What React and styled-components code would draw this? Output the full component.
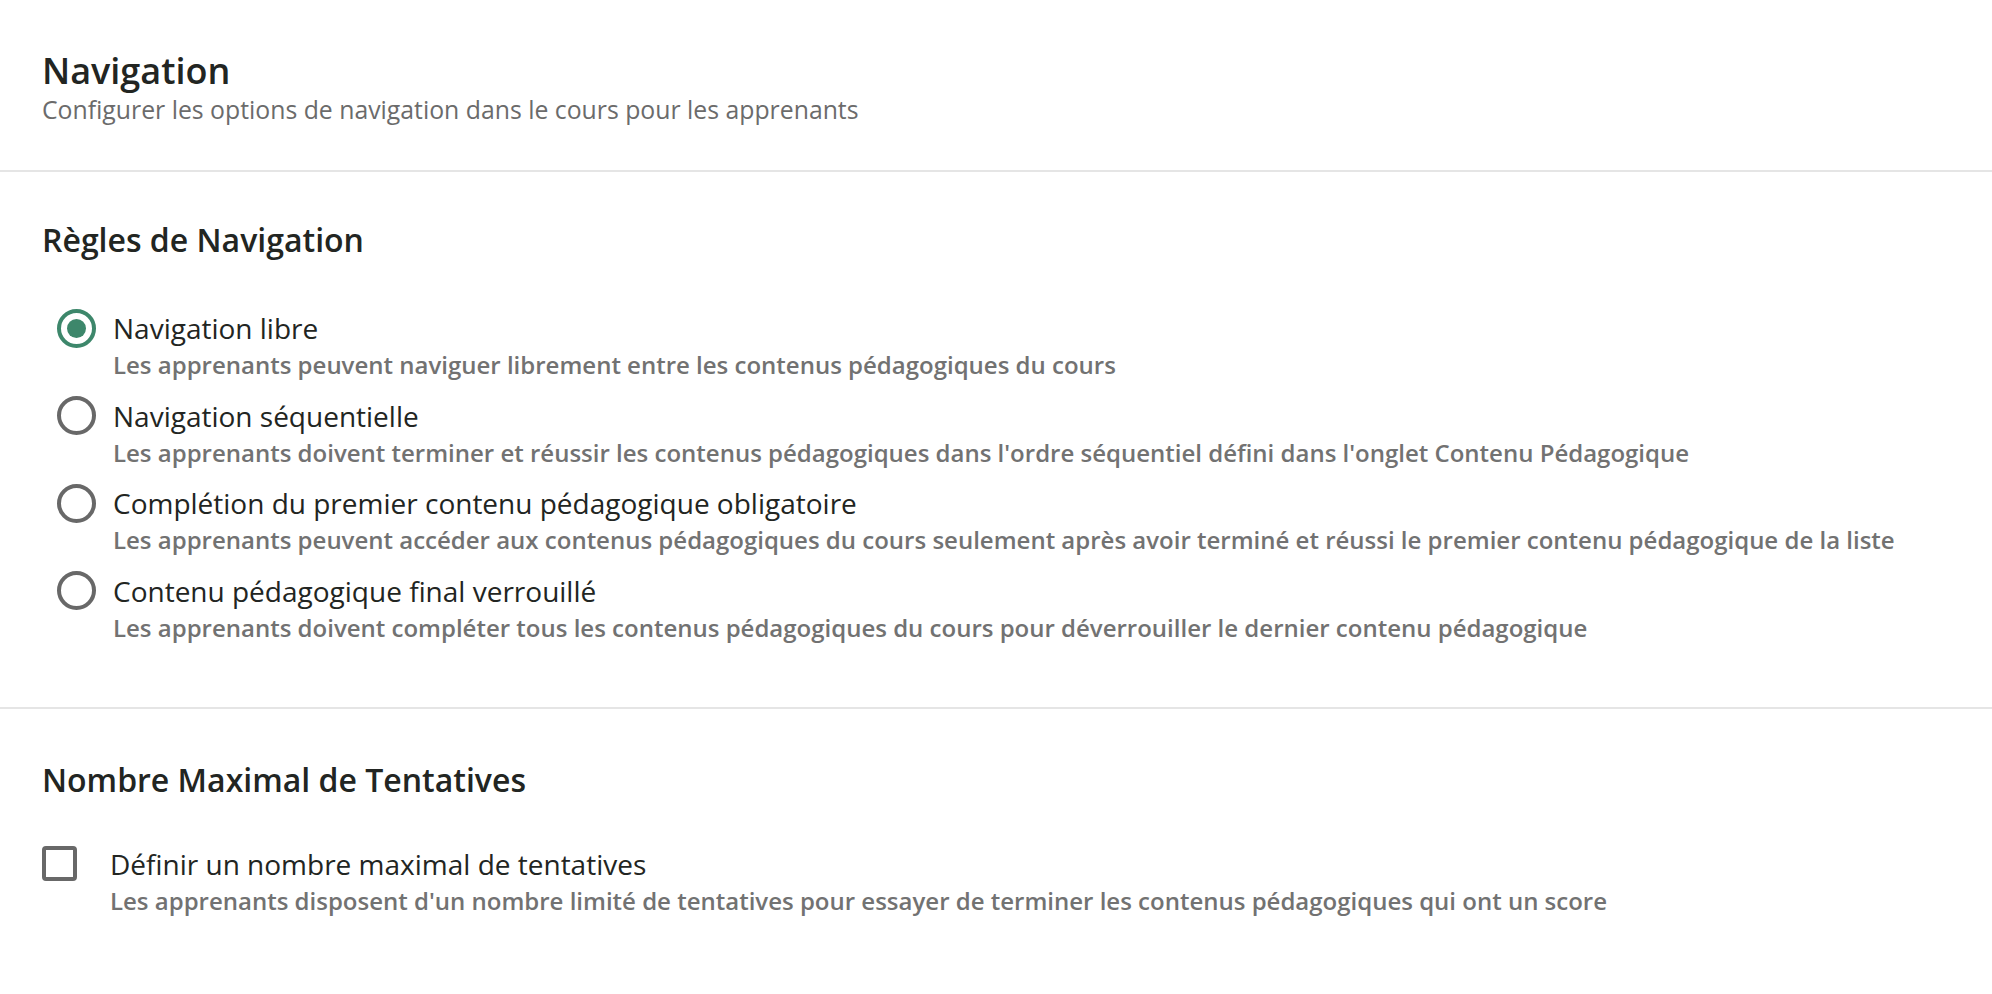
import React, { useState } from 'react';
import styled, { createGlobalStyle } from 'styled-components';

const GlobalStyle = createGlobalStyle`
  * { box-sizing: border-box; }
  body {
    margin: 0;
    background: #ffffff;
    font-family: "Open Sans", "Noto Sans", sans-serif;
    color: #222522;
  }
`

const Page = styled.div`
  width: 100%;
  background: #fff;
`

const Header = styled.header`
  padding: 49px 42px 46px 42px;
  border-bottom: 2px solid #e5e5e5;
`

const Title = styled.h1`
  margin: 0;
  font-size: 36px;
  line-height: 44px;
  font-weight: 600;
  color: #222522;
`

const Subtitle = styled.p`
  margin: 1px 0 0 0;
  font-size: 24.8px;
  line-height: 30px;
  font-weight: 400;
  color: #6b6b6b;
`

const Section = styled.section`
  padding: ${props => props.top}px 42px ${props => props.bottom}px 42px;
  border-bottom: ${props => props.divider ? '2px solid #e5e5e5' : 'none'};
`

const SectionTitle = styled.h2`
  margin: 0 0 ${props => props.gap}px 0;
  font-size: 32px;
  line-height: 40px;
  font-weight: 600;
  color: #222522;
`

const OptionList = styled.div`
  display: flex;
  flex-direction: column;
  gap: 14.6px;
`

const Option = styled.label`
  display: grid;
  grid-template-columns: ${props => props.box}px 1fr;
  column-gap: ${props => props.gap}px;
  padding-left: ${props => props.indent}px;
  cursor: pointer;
`

const ControlCell = styled.div`
  height: 40px;
  display: flex;
  align-items: center;
`

const Radio = styled.span`
  width: 39px;
  height: 39px;
  border-radius: 50%;
  border: 4px solid ${props => props.checked ? '#3d876b' : '#686868'};
  display: flex;
  align-items: center;
  justify-content: center;

  &::after {
    content: '';
    width: 19px;
    height: 19px;
    border-radius: 50%;
    background: #3d876b;
    display: ${props => props.checked ? 'block' : 'none'};
  }
`

const Checkbox = styled.span`
  width: 35px;
  height: 35px;
  border: 4px solid #686868;
  border-radius: 4px;
  background: ${props => props.checked ? '#3d876b' : 'transparent'};
`

const OptionText = styled.div`
  display: flex;
  flex-direction: column;
`

const OptionLabel = styled.span`
  font-size: 28px;
  line-height: 40px;
  font-weight: 400;
  color: #222522;
`

const OptionHint = styled.span`
  font-size: 24px;
  line-height: 33px;
  font-weight: 600;
  color: #727272;
`

const navigationRules = [
  {
    id: 'free',
    label: 'Navigation libre',
    hint: 'Les apprenants peuvent naviguer librement entre les contenus pédagogiques du cours'
  },
  {
    id: 'sequential',
    label: 'Navigation séquentielle',
    hint: "Les apprenants doivent terminer et réussir les contenus pédagogiques dans l'ordre séquentiel défini dans l'onglet Contenu Pédagogique"
  },
  {
    id: 'first',
    label: 'Complétion du premier contenu pédagogique obligatoire',
    hint: 'Les apprenants peuvent accéder aux contenus pédagogiques du cours seulement après avoir terminé et réussi le premier contenu pédagogique de la liste'
  },
  {
    id: 'last',
    label: 'Contenu pédagogique final verrouillé',
    hint: 'Les apprenants doivent compléter tous les contenus pédagogiques du cours pour déverrouiller le dernier contenu pédagogique'
  }
]

const App = () => {
  const [rule, setRule] = useState('free')
  const [limitAttempts, setLimitAttempts] = useState(false)

  return (
    <Page>
      <GlobalStyle />
      <Header>
        <Title>Navigation</Title>
        <Subtitle>Configurer les options de navigation dans le cours pour les apprenants</Subtitle>
      </Header>

      <Section top={48} bottom={63} divider>
        <SectionTitle gap={48}>Règles de Navigation</SectionTitle>
        <OptionList>
          {navigationRules.map(item => (
            <Option key={item.id} box={39} gap={17} indent={15} onClick={() => setRule(item.id)}>
              <ControlCell>
                <Radio checked={rule === item.id} />
              </ControlCell>
              <OptionText>
                <OptionLabel>{item.label}</OptionLabel>
                <OptionHint>{item.hint}</OptionHint>
              </OptionText>
            </Option>
          ))}
        </OptionList>
      </Section>

      <Section top={51} bottom={60}>
        <SectionTitle gap={44}>Nombre Maximal de Tentatives</SectionTitle>
        <Option box={35} gap={33} indent={0} onClick={() => setLimitAttempts(v => !v)}>
          <ControlCell>
            <Checkbox checked={limitAttempts} />
          </ControlCell>
          <OptionText>
            <OptionLabel>Définir un nombre maximal de tentatives</OptionLabel>
            <OptionHint>Les apprenants disposent d'un nombre limité de tentatives pour essayer de terminer les contenus pédagogiques qui ont un score</OptionHint>
          </OptionText>
        </Option>
      </Section>
    </Page>
  )
}

export default App;
